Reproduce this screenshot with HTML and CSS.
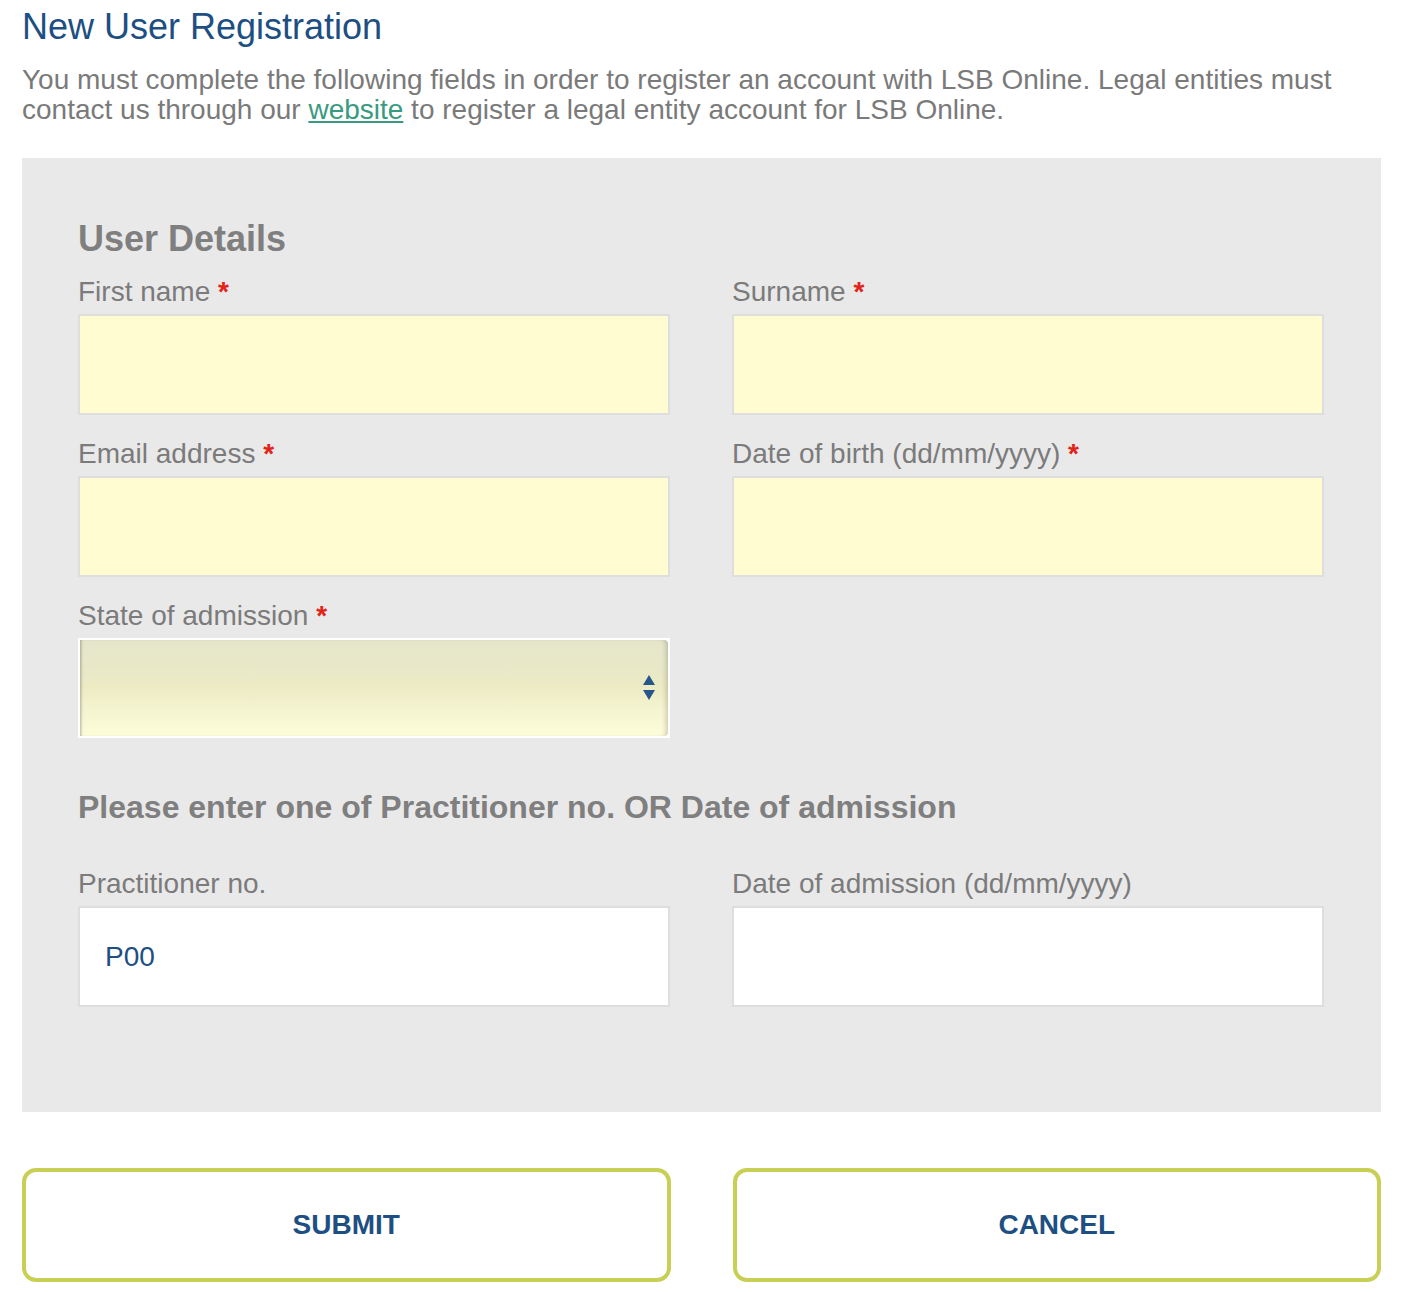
FILE: index.html
```html
<!DOCTYPE html>
<html lang="en">
<head>
<meta charset="utf-8">
<title>New User Registration</title>
<link rel="stylesheet" href="styles.css">
</head>
<body>
<div class="page">
  <h1 class="title">New User Registration</h1>
  <p class="intro">You must complete the following fields in order to register an account with LSB Online. Legal entities must contact us through our <a href="#" class="link">website</a> to register a legal entity account for LSB Online.</p>

  <form class="panel">
    <h2 class="section-title">User Details</h2>
    <div class="grid">
      <div class="field">
        <label class="label">First name <span class="req">*</span></label>
        <input class="input req-input" type="text">
      </div>
      <div class="field">
        <label class="label">Surname <span class="req">*</span></label>
        <input class="input req-input" type="text">
      </div>
      <div class="field">
        <label class="label">Email address <span class="req">*</span></label>
        <input class="input req-input" type="text">
      </div>
      <div class="field">
        <label class="label">Date of birth (dd/mm/yyyy) <span class="req">*</span></label>
        <input class="input req-input" type="text">
      </div>
      <div class="field">
        <label class="label">State of admission <span class="req">*</span></label>
        <div class="select-wrap">
          <select class="select"><option></option></select>
          <svg class="select-arrows" width="14" height="26" viewBox="0 0 14 26" aria-hidden="true">
            <polygon points="7,0 13,10 1,10" fill="#27578a"/>
            <polygon points="1,15 13,15 7,25" fill="#27578a"/>
          </svg>
        </div>
      </div>
    </div>

    <h3 class="sub-title">Please enter one of Practitioner no. OR Date of admission</h3>
    <div class="grid">
      <div class="field">
        <label class="label">Practitioner no.</label>
        <input class="input plain" type="text" value="P00">
      </div>
      <div class="field">
        <label class="label">Date of admission (dd/mm/yyyy)</label>
        <input class="input plain" type="text">
      </div>
    </div>
  </form>

  <div class="actions">
    <button class="btn" type="button">SUBMIT</button>
    <button class="btn" type="button">CANCEL</button>
  </div>
</div>
</body>
</html>
```

FILE: styles.css
```css
* { box-sizing: border-box; }

body {
  margin: 0;
  background: #ffffff;
  font-family: "Liberation Sans", Arial, Helvetica, sans-serif;
}

.page {
  padding: 7px 21px 0 22px;
}

.title {
  margin: 0;
  font-size: 36px;
  line-height: 40px;
  font-weight: normal;
  color: #1d4f82;
}

.intro {
  margin: 18px 0 0;
  font-size: 28px;
  line-height: 30px;
  color: #7a7a7a;
}

.link {
  display: inline-block;
  line-height: 30px;
  color: #3a9a80;
  text-decoration: underline;
}

.panel {
  margin-top: 33px;
  background: #e9e9e9;
  padding: 61px 57px 105px 56px;
}

.section-title {
  margin: 0 0 18px;
  font-size: 36px;
  line-height: 40px;
  font-weight: bold;
  color: #7f7f7f;
}

.grid {
  display: grid;
  grid-template-columns: 1fr 1fr;
  column-gap: 62px;
  row-gap: 24px;
}

.field {
  display: flex;
  flex-direction: column;
}

.label {
  font-size: 28px;
  line-height: 30px;
  color: #7b7b7b;
  margin-bottom: 7px;
}

.req {
  color: #e2231a;
  font-weight: bold;
}

.input {
  height: 101px;
  width: 100%;
  border: 2px solid #dedede;
  font-family: "Liberation Sans", Arial, sans-serif;
  font-size: 28px;
  color: #1d4f82;
  padding: 0 0 0 25px;
  outline: none;
  margin: 0;
}

.req-input {
  background: #fffcd1;
}

.plain {
  background: #ffffff;
}

.select-wrap {
  position: relative;
  height: 100px;
  border: 2px solid #ffffff;
  background: #ffffff;
}

.select {
  appearance: none;
  -webkit-appearance: none;
  display: block;
  width: 100%;
  height: 100%;
  margin: 0;
  border: none;
  border-radius: 0 4px 4px 0;
  background: linear-gradient(to bottom, #e5e5cb 0%, #e9e9c8 35%, #ecebc3 50%, #f4f3d0 70%, #fdfdda 100%);
  box-shadow: inset 3px 0 3px -2px rgba(0, 0, 0, 0.3), inset -5px 0 5px -3px rgba(0, 0, 0, 0.18);
  outline: none;
}

.select-arrows {
  position: absolute;
  right: 12px;
  top: 35px;
}

.sub-title {
  margin: 51px 0 44px;
  font-size: 32px;
  line-height: 36px;
  font-weight: bold;
  color: #7f7f7f;
}

.actions {
  display: grid;
  grid-template-columns: 1fr 1fr;
  column-gap: 62px;
  margin-top: 56px;
}

.btn {
  height: 114px;
  background: #ffffff;
  border: 4px solid #c8cf55;
  border-radius: 14px;
  font-family: "Liberation Sans", Arial, sans-serif;
  font-size: 28px;
  font-weight: bold;
  color: #1d4f82;
  cursor: pointer;
}
```
